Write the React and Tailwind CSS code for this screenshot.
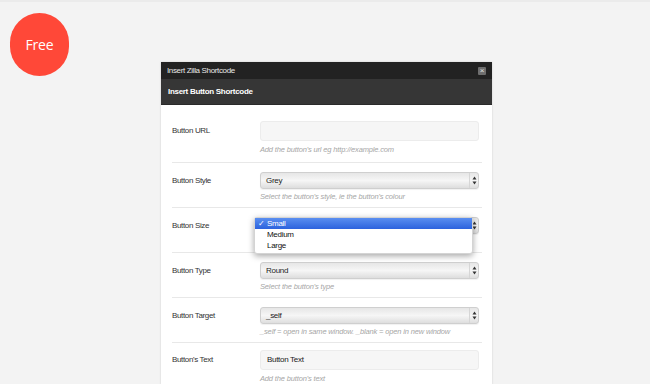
import React from "react";

const font = { fontFamily: '"Liberation Sans", Arial, sans-serif' };

const Arrows = () => (
  <svg width="5" height="9" viewBox="0 0 5 9" className="block">
    <path d="M2.5 0.5 L4.5 3.5 L0.5 3.5 Z" fill="#333" />
    <path d="M2.5 8.5 L4.5 5.5 L0.5 5.5 Z" fill="#333" />
  </svg>
);

const Select = ({ value }) => (
  <div className="relative h-[17px] w-[219px] rounded-[3px] border border-[#cfcfcf] bg-gradient-to-b from-[#e6e6e6] via-[#f6f6f6] to-[#dedede] flex items-center shadow-[0_1px_1px_rgba(0,0,0,0.06)]">
    <span className="flex-1 pl-[5px] text-[8px] tracking-[-0.3px] leading-none text-[#222]">{value}</span>
    <span className="w-[9px] h-full flex items-center justify-center border-l border-[#d6d6d6]">
      <Arrows />
    </span>
  </div>
);

const TextInput = ({ value }) => (
  <div className="h-[20px] w-[219px] rounded-[3px] border border-[#ececec] bg-[#f6f6f6] flex items-center">
    <span className="pl-[6px] text-[8px] tracking-[-0.3px] leading-none text-[#222]">{value}</span>
  </div>
);

const Help = ({ children, className = "" }) => (
  <div className={"text-[7.5px] tracking-[-0.15px] leading-[12px] italic text-[#a6a6a6] " + className}>{children}</div>
);

const Row = ({ label, children, help, text, last, menu }) => (
  <div className={(last ? "" : "border-b border-[#e8e8e8] ") + (text ? "pt-[7px] " : "pt-[9px] ") + (text ? "pb-[6px]" : "pb-[4px]")}>
    <div className="flex items-center">
      <div className="w-[88px] text-[8px] tracking-[-0.35px] text-[#333] leading-none">{label}</div>
      <div className="relative">
        {children}
        {menu}
      </div>
    </div>
    <Help className={"ml-[88px] " + (text ? "mt-[3px]" : "mt-[2px]")}>{help || "\u00a0"}</Help>
  </div>
);

const Menu = () => (
  <div className="absolute left-[-6px] top-0 w-[219px] bg-white rounded-[3px] shadow-[0_2px_6px_rgba(0,0,0,0.35)] border border-[#d4d4d4] pb-[2px] z-10 text-[8px] tracking-[-0.3px] leading-none">
    <div className="h-[11px] bg-gradient-to-b from-[#5a8ef0] to-[#2c62dd] flex items-center text-white">
      <span className="w-[11px] pl-[3px]">✓</span>
      <span className="pl-[1px]">Small</span>
    </div>
    <div className="h-[11px] flex items-center text-[#111] pl-[12px]">Medium</div>
    <div className="h-[11px] flex items-center text-[#111] pl-[12px]">Large</div>
  </div>
);

export default function App() {
  return (
    <div className="relative h-[384px] w-[650px] overflow-hidden bg-[#f3f3f3] border-t-[2px] border-[#ebebeb]" style={font}>
      <div
        className="absolute left-[10px] top-[11px] w-[59px] h-[63px] rounded-full bg-[#ff4838] flex items-center justify-center text-white text-[14px] tracking-[-0.2px]"
        style={{ fontFamily: '"Open Sans", sans-serif' }}
      >
        Free
      </div>

      <div className="ml-[161px] mt-[60px] w-[331px] bg-white shadow-[0_0_2px_rgba(0,0,0,0.15)]">
        <div className="h-[17px] bg-[#222222] flex items-center justify-between pl-[6px] pr-[6px]">
          <span className="text-[8px] tracking-[-0.35px] text-[#e8e8e8] leading-none">Insert Zilla Shortcode</span>
          <span className="w-[8px] h-[8px] bg-[#6e6e6e] rounded-[1px] flex items-center justify-center text-[8px] leading-none text-[#e0e0e0]">×</span>
        </div>
        <div className="h-[26px] bg-[#363636] flex items-center pl-[7px] border-b border-[#2a2a2a]">
          <span className="text-[8px] tracking-[-0.3px] font-bold text-white leading-none">Insert Button Shortcode</span>
        </div>

        <div className="pt-[9px] pl-[11px] pr-[10px] h-[280px]">
          <Row label="Button URL" text help="Add the button's url eg http://example.com">
            <TextInput value="" />
          </Row>
          <Row label="Button Style" help="Select the button's style, ie the button's colour">
            <Select value="Grey" />
          </Row>
          <Row label="Button Size" help="" menu={<Menu />}>
            <Select value="" />
          </Row>
          <Row label="Button Type" help="Select the button's type">
            <Select value="Round" />
          </Row>
          <Row label="Button Target" help="_self = open in same window. _blank = open in new window">
            <Select value="_self" />
          </Row>
          <Row label="Button's Text" text last help="Add the button's text">
            <TextInput value="Button Text" />
          </Row>
        </div>
      </div>
    </div>
  );
}
